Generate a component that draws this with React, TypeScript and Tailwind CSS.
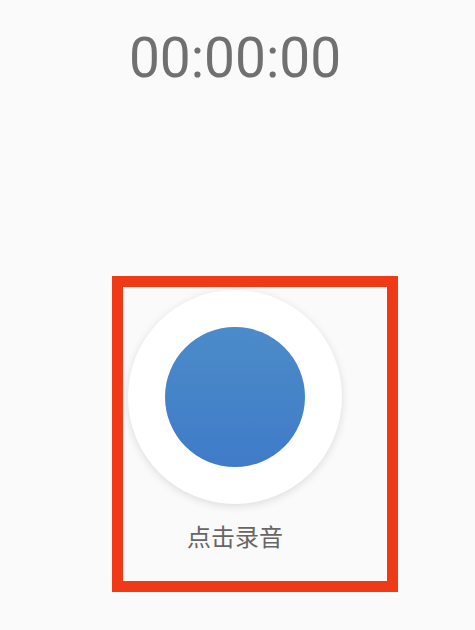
export default function App() {
  return (
    <div className="relative min-h-[630px] w-full bg-[#fafafa] overflow-hidden">
      <div className="flex w-[470px] flex-col items-center">
        {/* timer */}
        <div
          className="mt-[31px] text-[55px] leading-[55px] text-[#707070]"
          style={{ fontFamily: "Roboto, 'Noto Sans', sans-serif" }}
        >
          00:00:00
        </div>

        {/* record button */}
        <button className="mt-[204px] flex h-[214px] w-[214px] items-center justify-center rounded-full bg-white shadow-[0_2px_8px_rgba(0,0,0,0.12)]">
          <span className="block h-[140px] w-[140px] rounded-full bg-gradient-to-b from-[#4c8bc9] to-[#3f7bc8]" />
        </button>

        <div
          className="mt-[20px] text-[24px] leading-[24px] text-[#666666]"
          style={{ fontFamily: "'Noto Sans CJK SC', 'Noto Sans', sans-serif" }}
        >
          点击录音
        </div>
      </div>

      {/* annotation box */}
      <div className="pointer-events-none absolute left-[112px] top-[276px] h-[316px] w-[286px] border-[11px] border-[#f03a17]" />
    </div>
  );
}
